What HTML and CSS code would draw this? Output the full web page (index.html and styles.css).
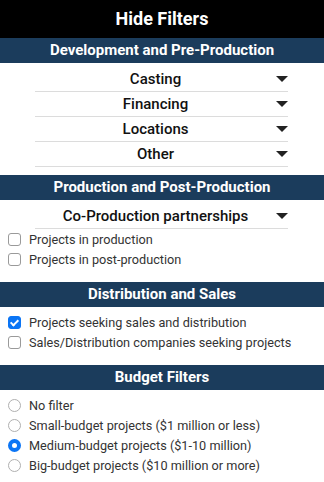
FILE: index.html
```html
<!DOCTYPE html>
<html lang="en">
<head>
  <meta charset="UTF-8">
  <title>Filters</title>
  <meta name="viewport" content="width=device-width, initial-scale=1">
  <link rel="stylesheet" href="styles.css">
</head>
<body>

  <div class="toggle">Hide Filters</div>

  <div class="section">
    <h2>Development and Pre-Production</h2>
    <div class="dropdowns last">
      <div class="dropdown"><span>Casting</span><i class="arrow"></i></div>
      <div class="dropdown"><span>Financing</span><i class="arrow"></i></div>
      <div class="dropdown"><span>Locations</span><i class="arrow"></i></div>
      <div class="dropdown"><span>Other</span><i class="arrow"></i></div>
    </div>
  </div>

  <div class="section">
    <h2>Production and Post-Production</h2>
    <div class="dropdowns">
      <div class="dropdown"><span>Co-Production partnerships</span><i class="arrow"></i></div>
    </div>
    <div class="options">
      <label><input type="checkbox"> Projects in production</label>
      <label><input type="checkbox"> Projects in post-production</label>
    </div>
  </div>

  <div class="section">
    <h2>Distribution and Sales</h2>
    <div class="options">
      <label><input type="checkbox" checked> Projects seeking sales and distribution</label>
      <label><input type="checkbox"> Sales/Distribution companies seeking projects</label>
    </div>
  </div>

  <div class="section">
    <h2>Budget Filters</h2>
    <div class="options">
      <label><input type="radio" name="budget"> No filter</label>
      <label><input type="radio" name="budget"> Small-budget projects ($1 million or less)</label>
      <label><input type="radio" name="budget" checked> Medium-budget projects ($1-10 million)</label>
      <label><input type="radio" name="budget"> Big-budget projects ($10 million or more)</label>
    </div>
  </div>

</body>
</html>
```

FILE: styles.css
```css
body {
  margin: 0;
  font-family: Roboto, "Liberation Sans", sans-serif;
  background-color: #fff;
  color: #111;
}

.toggle {
  background-color: #000;
  color: #fff;
  font-size: 18px;
  font-weight: bold;
  text-align: center;
  height: 38px;
  line-height: 38px;
}

.section h2 {
  margin: 0;
  background-color: #1b3c5c;
  color: #fff;
  font-size: 15px;
  font-weight: bold;
  text-align: center;
  height: 25px;
  line-height: 25px;
}

.dropdowns {
  padding: 4px 36px 0 35px;
}

.dropdowns.last {
  padding-bottom: 8px;
}

.dropdown {
  display: flex;
  align-items: center;
  height: 24px;
  border-bottom: 1px solid #dcdcdc;
  font-size: 15px;
  font-weight: 500;
}

.dropdown span {
  flex: 1;
  text-align: center;
}

.arrow {
  width: 0;
  height: 0;
  border-left: 6px solid transparent;
  border-right: 6px solid transparent;
  border-top: 6px solid #222;
}

.options {
  padding: 0 0 13px 4px;
}

h2 + .options {
  padding-top: 5px;
}

.options label {
  display: flex;
  align-items: center;
  height: 20px;
  font-size: 12.7px;
  color: #333;
}

.options input {
  appearance: none;
  flex: none;
  width: 13px;
  height: 13px;
  margin: 0 8px 0 4px;
  border: 1px solid #9a9a9a;
  border-radius: 3px;
  background-color: #fff;
  position: relative;
}

.options input[type="checkbox"]:checked {
  background-color: #0b75f5;
  border-color: #0b75f5;
}

.options input[type="checkbox"]:checked::after {
  content: "";
  position: absolute;
  left: 3px;
  top: 1px;
  width: 3px;
  height: 6px;
  border: solid #fff;
  border-width: 0 2px 2px 0;
  transform: rotate(45deg);
}

.options input[type="radio"] {
  border-radius: 50%;
  border-color: #b0b0b0;
}

.options input[type="radio"]:checked {
  border: 4px solid #0b75f5;
}
```
